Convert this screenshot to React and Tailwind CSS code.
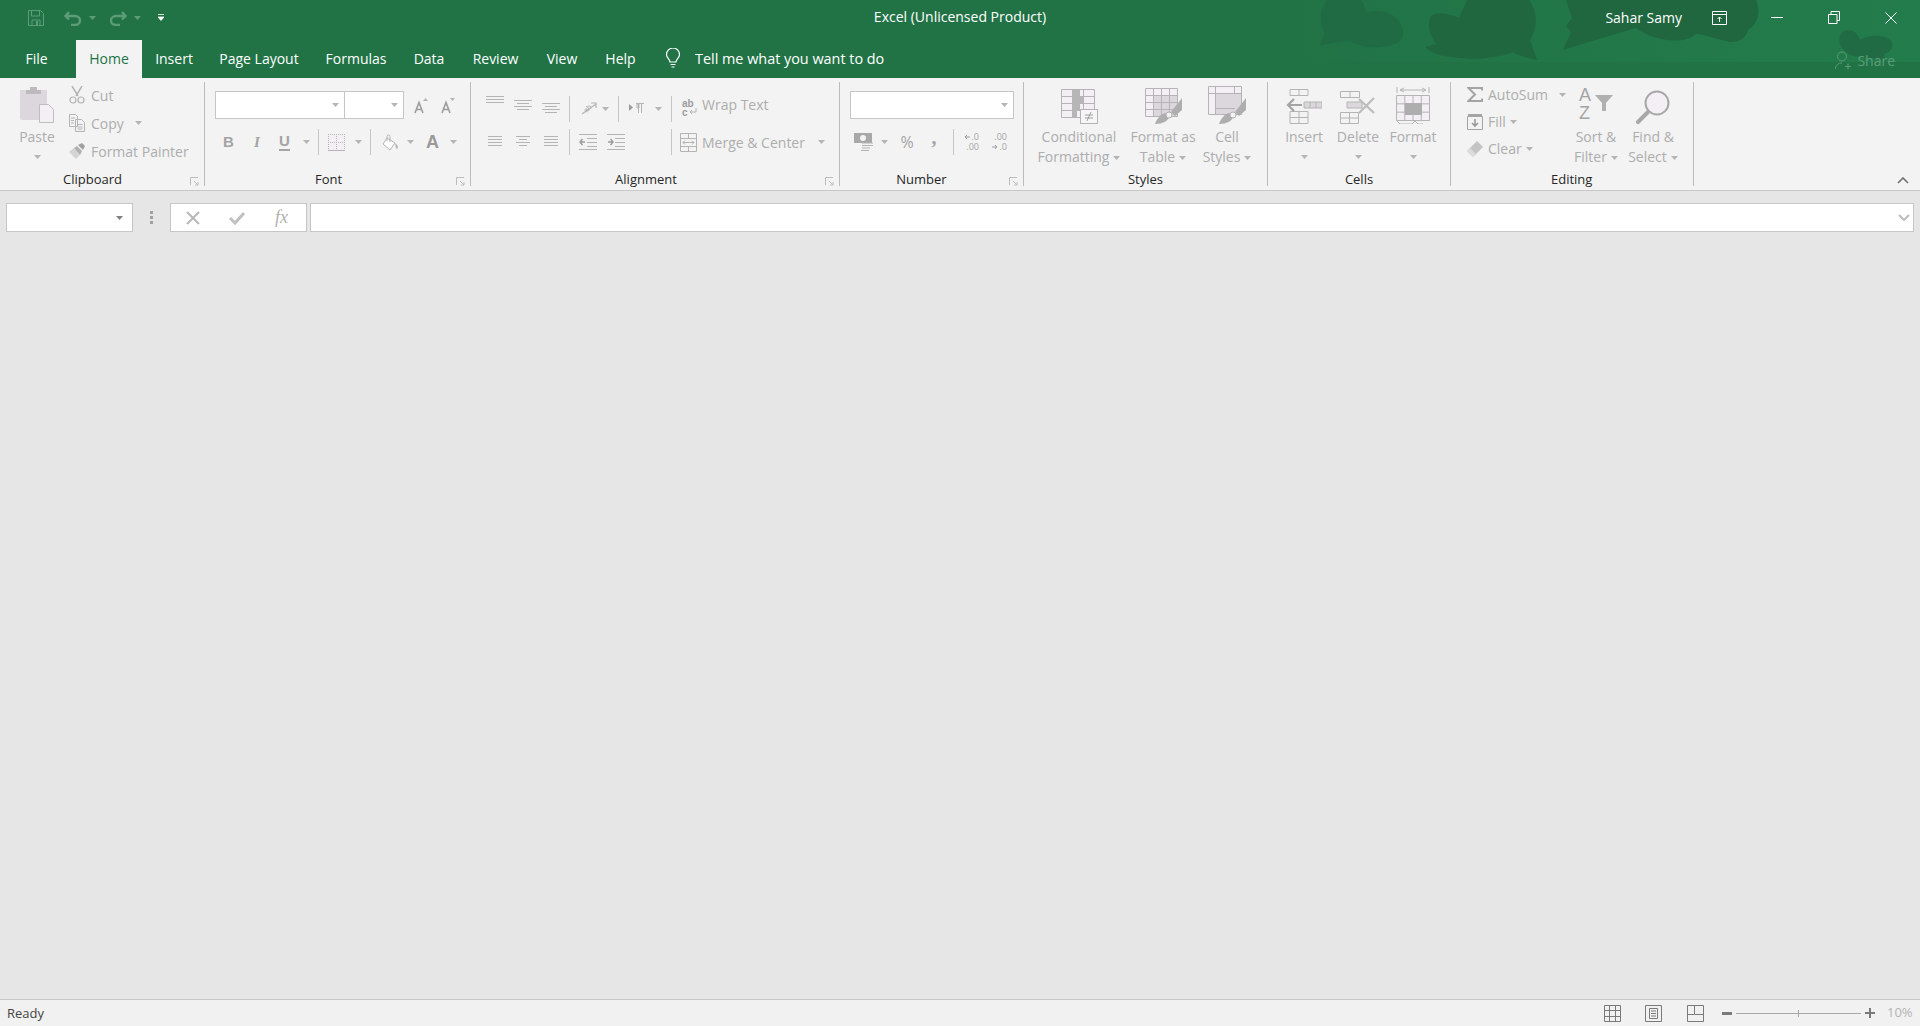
import React from "react";

const G = "#b4b4b4";
const D = "#9c9c9c";
const L = "#dcd7dc";
const P = "#f3eff5";

function Ico({ w, h, className = "", children }) {
  return (
    <svg width={w} height={h} viewBox={`0 0 ${w} ${h}`} fill="none" className={`shrink-0 ${className}`}>
      {children}
    </svg>
  );
}

function Caret({ className = "", color = G }) {
  return (
    <Ico w={7} h={4} className={className}>
      <path d="M0 0h7L3.5 4z" fill={color} />
    </Ico>
  );
}

function Div({ className = "" }) {
  return <div className={`w-px h-[26px] bg-[#c6c6c6] shrink-0 ${className}`}></div>;
}

function Launcher() {
  return (
    <Ico w={9} h={9} className="absolute right-[5px] top-[3px]">
      <path d="M.5 8V.5H8M4 4l4 4M8 5v3H5" stroke="#bdbdbd" />
    </Ico>
  );
}

function Group({ label, width, launcher, labelClass = "justify-center", children }) {
  return (
    <div className={`${width} h-full flex flex-col border-r border-[#bcbcbc] shrink-0`}>
      <div className="h-[92px]">{children}</div>
      <div className={`relative h-[12px] flex items-center text-[#262626] text-[13px] ${labelClass}`}>
        {label}
        {launcher && <Launcher />}
      </div>
    </div>
  );
}

function Big({ lines, width, caretLine, className = "", children }) {
  return (
    <div className={`${width} flex flex-col items-center text-[14px] leading-[20px] text-[#adadad] shrink-0 ${className}`}>
      <div className="h-[45px] flex items-end pb-[3px]">{children}</div>
      {lines.map((t, i) => (
        <div key={t} className="flex items-center whitespace-nowrap">
          {t}
          {caretLine && i === lines.length - 1 && <Caret className="ml-[4px] mt-[2px]" />}
        </div>
      ))}
      {!caretLine && (
        <div className="h-[20px] flex items-center">
          <Caret />
        </div>
      )}
    </div>
  );
}

function Lines({ w = 18, h = 20, ys, short }) {
  return (
    <Ico w={w} h={h}>
      {ys.map((y, i) => (
        <path key={y} d={`M${short && i % 2 ? 3 : 0} ${y}.5H${short && i % 2 ? w - 3 : w}`} stroke={G} />
      ))}
    </Ico>
  );
}

function Grid3({ x, y, w, h, cols, rows }) {
  const out = [];
  for (let i = 0; i <= cols; i++) out.push(<path key={"c" + i} d={`M${x + (i * w) / cols} ${y}v${h}`} stroke={G} />);
  for (let i = 0; i <= rows; i++) out.push(<path key={"r" + i} d={`M${x} ${y + (i * h) / rows}h${w}`} stroke={G} />);
  return out;
}

function Brush({ x, y }) {
  return (
    <g transform={`translate(${x} ${y})`}>
      <path d="M0 18C2 12 6 8 10 7l4 4c-1 4-6 7-14 7z" fill="#aeaeae" />
      <circle cx="14" cy="9" r="3" fill="#f3f3f3" stroke="#aeaeae" />
      <path d="M16 6L27-8V4L20 10z" fill="#aeaeae" />
    </g>
  );
}

function Tab({ width, children }) {
  return <div className={`${width} text-center mb-[2px]`}>{children}</div>;
}

export default function App() {
  return (
    <div className="h-screen flex flex-col bg-[#e6e6e6] overflow-hidden font-['Open_Sans',sans-serif]">
      {/* title + tabs */}
      <div className="relative bg-[#217346] text-white shrink-0">
        <svg className="absolute left-0 top-0" width="1920" height="62" viewBox="0 0 1920 62">
          <defs>
            <linearGradient id="fade" x1="0" x2="1" y1="0" y2="0">
              <stop offset="0" stopColor="#237c4c" stopOpacity="0" />
              <stop offset="1" stopColor="#237c4c" />
            </linearGradient>
          </defs>
          <rect x="1290" width="630" height="62" fill="url(#fade)" />
          <g>
            <path fill="#206b43" d="M1319 46l6-12c-6-10-6-24 2-34h34c3 4 5 8 5 13 6-3 14-3 22 0 10 4 16 12 15 22-1 7-8 11-22 12-16 2-28-4-32-6-10 1-20 2-30 5z" />
            <path fill="#20663f" d="M1425 47l12-3c-8-8-10-20-6-28 5-4 18-3 28 2l8-18h62c9 12 9 28 1 40l7 20c-10-2-18-4-24-8-14 6-38 8-52 6-14-1-28-3-36-11z" />
            <path fill="#20663f" d="M1563 50l8-18-5-6 6-8-6-18h190c5 12 2 24-8 30-2 8-8 12-18 12-18-4-26-8-34-8-14 12-44 6-60-6-20 6-48 14-73 22z" />
            <path fill="#206b43" d="M1840 44c-2-8 2-14 8-14 6 0 10 4 12 10 8-6 26-6 32 2 2 6-2 10-8 12l2 6-14-2c-12 0-28-2-32-14z" />
          </g>
        </svg>

        <div className="relative h-[40px] pb-[5px] grid grid-cols-[1fr_auto_1fr] items-center">
          <div className="flex items-center pl-[28px]">
            <Ico w={16} h={16}>
              <path d="M.5.5h12l3 3v12H.5z" stroke="#5c9c79" />
              <path d="M3.5 1v5h8V1M4 15v-5h8v5" stroke="#5c9c79" />
              <path d="M8 11h2v4H8z" fill="#5c9c79" />
            </Ico>
            <Ico w={18} h={16} className="ml-[20px]">
              <path d="M5 2L1.5 6 5 9.5M2 6h9c3 0 5 2 5 4.5S14 15 11 15H7" stroke="#5c9c79" strokeWidth="2.4" />
            </Ico>
            <Caret className="ml-[7px]" color="#5c9c79" />
            <Ico w={18} h={16} className="ml-[13px]">
              <path d="M13 2l3.5 4L13 9.5M16 6H7c-3 0-5 2-5 4.5S4 15 7 15h4" stroke="#5c9c79" strokeWidth="2.4" />
            </Ico>
            <Caret className="ml-[7px]" color="#5c9c79" />
            <Ico w={6} h={8} className="ml-[17px]">
              <path d="M0 .5h6M0 3h6L3 6.5z" stroke="#fff" fill="#fff" strokeWidth=".8" />
            </Ico>
          </div>
          <div className="text-[14px] whitespace-nowrap -mt-[2px]">Excel (Unlicensed Product)</div>
          <div className="flex items-center justify-end pr-[23px]">
            <span className="text-[14px] whitespace-nowrap mr-[30px]">Sahar Samy</span>
            <Ico w={15} h={14}>
              <path d="M.5.5h14v13H.5zM1 3.5h13M7.5 11V6M5.5 8l2-2 2 2" stroke="#fff" />
            </Ico>
            <Ico w={12} h={1} className="ml-[44px]">
              <path d="M0 .5h12" stroke="#fff" />
            </Ico>
            <Ico w={12} h={13} className="ml-[45px]">
              <path d="M.5 3.5h8.500v9H.5zM3 3V.5h8.500v9H9" stroke="#fff" />
            </Ico>
            <Ico w={12} h={12} className="ml-[45px]">
              <path d="M.5.5l11 11M11.500.5l-11 11" stroke="#fff" />
            </Ico>
          </div>
        </div>

        <div className="relative h-[38px] flex items-center text-[14px]">
          <div className="w-[76px] h-full flex items-center justify-center pr-[3px] pb-[2px]">File</div>
          <div className="w-[66px] h-full flex items-center justify-center pb-[2px] bg-[#f3f3f3] text-[#217346]">Home</div>
          <Tab width="w-[64px]">Insert</Tab>
          <Tab width="w-[106px]">Page Layout</Tab>
          <Tab width="w-[88px]">Formulas</Tab>
          <Tab width="w-[58px]">Data</Tab>
          <Tab width="w-[75px]">Review</Tab>
          <Tab width="w-[58px]">View</Tab>
          <Tab width="w-[59px]">Help</Tab>
          <Ico w={16} h={20} className="ml-[15px] mb-[2px]">
            <path d="M5 14c0-3-3.500-4-3.500-7.500a6.500 6.500 0 0 1 13 0C14.500 10 11 11 11 14zM5.500 16.500h5M6.500 19h3" stroke="#fff" strokeWidth="1.2" />
          </Ico>
          <div className="ml-[14px] mb-[1px] text-[14.400px] whitespace-nowrap">Tell me what you want to do</div>
          <div className="ml-auto mr-[25px] flex items-center text-[#5c9c79]">
            <Ico w={16} h={19} className="mt-[3px]">
              <circle cx="7" cy="5.500" r="4.500" stroke="#5c9c79" />
              <path d="M.5 18c0-4 3-6 6.500-6M10 15.500h6M13 12.500v6" stroke="#5c9c79" />
            </Ico>
            <span className="ml-[6px] mt-[3px]">Share</span>
          </div>
        </div>
      </div>

      {/* ribbon */}
      <div className="relative h-[113px] pt-[4px] pb-[4px] bg-[#f3f3f3] border-b border-[#c8c8c8] flex shrink-0">
        <Group label="Clipboard" width="w-[205px]" launcher labelClass="justify-start pl-[63px]">
          <div className="flex">
            <div className="ml-[12px] w-[50px] flex flex-col items-center text-[14px] leading-[20px] text-[#adadad]">
              <div className="h-[45px] pt-[4px]">
                <Ico w={34} h={37}>
                  <path d="M0 4h27v30H2a2 2 0 0 1-2-2z" fill={L} />
                  <path d="M6 4h15v4H6zM10 1h7v4h-7z" fill="#bdb9bd" />
                  <path d="M19.500 18.500h9l5 5v13h-14z" fill={P} stroke="#bdbdbd" />
                </Ico>
              </div>
              <div>Paste</div>
              <div className="h-[20px] flex items-center">
                <Caret />
              </div>
            </div>
            <div className="ml-[7px] -mt-[1px] text-[14px] text-[#adadad]">
              <div className="h-[28px] flex items-center">
                <Ico w={16} h={18}>
                  <path d="M3 0l6 10M13 0L7 10" stroke={G} strokeWidth="1.5" />
                  <circle cx="4" cy="14" r="3" stroke={G} strokeWidth="1.2" />
                  <circle cx="12" cy="14" r="3" stroke={G} strokeWidth="1.2" />
                </Ico>
                <span className="ml-[6px]">Cut</span>
              </div>
              <div className="h-[28px] flex items-center">
                <Ico w={16} h={18}>
                  <path d="M.5.5h6l2 2v10H.5zM6.500 5.500h6l3 3v9h-9zM2 4h4M2 6.500h3M2 9h3M8.500 10.500h5M8.500 13h5M8.500 15h5" stroke={G} />
                </Ico>
                <span className="ml-[6px]">Copy</span>
                <Caret className="ml-[11px]" />
              </div>
              <div className="h-[28px] flex items-center">
                <Ico w={17} h={16}>
                  <path d="M0 9l5-4 6 7-4 4z" fill="#d6d3d6" />
                  <path d="M5 5l3-2 5 5-2 4z" fill="#b0b0b0" />
                  <path d="M9 2l4-2 3 3-2 4z" fill="#a0a0a0" />
                </Ico>
                <span className="ml-[5px] whitespace-nowrap">Format Painter</span>
              </div>
            </div>
          </div>
        </Group>

        <Group label="Font" width="w-[266px]" launcher labelClass="justify-start pl-[110px]">
          <div className="h-[37px] flex items-end">
            <div className="ml-[10px] w-[130px] h-[28px] bg-white border border-[#c6c6c6] flex items-center justify-end pr-[5px]">
              <Caret />
            </div>
            <div className="-ml-px w-[60px] h-[28px] bg-white border border-[#c6c6c6] flex items-center justify-end pr-[5px]">
              <Caret />
            </div>
            <Ico w={14} h={16} className="ml-[10px] mb-[5px]">
              <path d="M1 15L5 4.500 9 15M2.500 11.500h5" stroke={D} strokeWidth="1.6" />
              <path d="M9 3l2.500-3L14 3z" fill={G} />
            </Ico>
            <Ico w={14} h={16} className="ml-[13px] mb-[5px]">
              <path d="M1 15L5 4.500 9 15M2.500 11.500h5" stroke={D} strokeWidth="1.6" />
              <path d="M9 0l2.500 3L14 0z" fill={G} />
            </Ico>
          </div>
          <div className="mt-[10px] h-[26px] flex items-center text-[#a4a4a4]">
            <span className="ml-[18px] w-[10px] text-center text-[15px] font-bold font-['Liberation_Sans',sans-serif]">B</span>
            <span className="ml-[20px] w-[8px] text-center text-[15px] font-bold italic font-['Liberation_Serif',serif]">I</span>
            <div className="ml-[18px] w-[11px] text-center text-[15px] font-bold font-['Liberation_Sans',sans-serif] leading-[16px] border-b-2 border-[#a4a4a4]">U</div>
            <Caret className="ml-[13px]" />
            <Div className="ml-[8px]" />
            <Ico w={17} h={17} className="ml-[9px]">
              <path d="M1 1h15v15H1z" fill={P} />
              <path d="M.5 0v16M8.500 0v16M16.500 0v16M0 .5h17M0 8.500h17" stroke={G} strokeDasharray="1 1" />
              <path d="M0 16.500h17" stroke={G} />
            </Ico>
            <Caret className="ml-[10px]" />
            <Div className="ml-[8px]" />
            <Ico w={16} h={17} className="ml-[11px]">
              <path d="M5 4l8 5-5 7-7-6z" stroke={G} fill="#fff" />
              <path d="M5 7V2.500a1.500 1.500 0 0 1 3 0V8" stroke={G} />
              <path d="M13 9c2 1 3 3 3 5.500h-2z" fill={G} />
            </Ico>
            <Caret className="ml-[9px]" />
            <span className="ml-[12px] w-[12px] text-center text-[18px] font-bold text-[#9a9a9a] font-['Liberation_Sans',sans-serif]">A</span>
            <Caret className="ml-[12px]" />
          </div>
        </Group>

        <Group label="Alignment" width="w-[369px]" launcher labelClass="justify-center pr-[18px]">
          <div className="h-[37px] pt-[14px] flex items-start">
            <div className="ml-[15px]">
              <Lines ys={[0, 3, 6]} />
            </div>
            <div className="ml-[10px]">
              <Lines ys={[4, 7, 10, 13]} short />
            </div>
            <div className="ml-[10px]">
              <Lines ys={[7, 10, 13, 16]} short />
            </div>
            <Div className="ml-[9px]" />
            <Ico w={19} h={18} className="ml-[9px] mt-[2px]">
              <text x="4" y="13" fontSize="7" fontWeight="700" fill={G} fontFamily="Liberation Sans" transform="rotate(-45 8 10)">ab</text>
              <path d="M3 16L17 6M12 5h5v5" stroke={G} strokeWidth="1.200" />
            </Ico>
            <Caret className="ml-[4px] mt-[11px]" />
            <Div className="ml-[9px]" />
            <Ico w={15} h={10} className="ml-[10px] mt-[7px]">
              <path d="M0 1l4 3.500L0 8z" fill={D} />
              <path d="M7 .5h8M9.500 1v9M12.500 1v9M8 1h2v4H8z" stroke={G} />
            </Ico>
            <Caret className="ml-[11px] mt-[11px]" />
            <Div className="ml-[9px]" />
            <Ico w={15} h={18} className="ml-[10px] mt-[3px]">
              <text x="0" y="8" fontSize="10" fontWeight="700" fill={D} fontFamily="Liberation Sans">ab</text>
              <text x="0" y="17" fontSize="10" fontWeight="700" fill={D} fontFamily="Liberation Sans">c</text>
              <path d="M14 9v4H8M10 11l-2 2 2 2" stroke={G} />
            </Ico>
            <span className="ml-[5px] -mt-[2px] text-[14px] text-[#adadad] whitespace-nowrap">Wrap Text</span>
          </div>
          <div className="mt-[10px] h-[26px] flex items-center">
            <div className="ml-[17px]">
              <Lines w={14} h={14} ys={[1, 4, 7, 10]} />
            </div>
            <div className="ml-[14px]">
              <Lines w={14} h={14} ys={[1, 4, 7, 10]} short />
            </div>
            <div className="ml-[14px]">
              <Lines w={14} h={14} ys={[1, 4, 7, 10]} />
            </div>
            <Div className="ml-[11px]" />
            <Ico w={18} h={16} className="ml-[9px]">
              <path d="M0 .5h18M8 4.500h10M8 8.500h10M8 12.500h10M0 15.500h18" stroke={G} />
              <path d="M6 8H1M3.500 5L1 8l2.500 3" stroke={D} strokeWidth="1.500" />
            </Ico>
            <Ico w={18} h={16} className="ml-[10px]">
              <path d="M0 .5h18M8 4.500h10M8 8.500h10M8 12.500h10M0 15.500h18" stroke={G} />
              <path d="M1 8h5M3.500 5L6 8l-2.500 3" stroke={D} strokeWidth="1.500" />
            </Ico>
            <Div className="ml-[46px]" />
            <Ico w={17} h={19} className="ml-[8px]">
              <path d="M.5.500h16v18H.5zM1 5.500h15M1 13.500h15M8.500 1v4M8.500 14v4M3 9.500h11M5 7.500l-2 2 2 2M12 7.500l2 2-2 2" stroke={G} />
            </Ico>
            <span className="ml-[5px] w-[106px] text-[14px] text-[#adadad] whitespace-nowrap">Merge &amp; Center</span>
            <Caret className="ml-[10px]" />
          </div>
        </Group>

        <Group label="Number" width="w-[184px]" launcher labelClass="justify-center pr-[20px]">
          <div className="h-[37px] flex items-end">
            <div className="ml-[10px] w-[164px] h-[28px] bg-white border border-[#c6c6c6] flex items-center justify-end pr-[5px]">
              <Caret />
            </div>
          </div>
          <div className="mt-[10px] h-[26px] flex items-center">
            <Ico w={19} h={20} className="ml-[14px]">
              <path d="M0 1h18v10H0z" fill="#a8a8a8" />
              <circle cx="9" cy="6" r="3" fill="#f3f3f3" />
              <path d="M8 11h11M8 13.500h11M8 16h8M7 18.500h8" stroke={G} strokeWidth="1.200" />
            </Ico>
            <Caret className="ml-[8px]" />
            <span className="ml-[11px] w-[16px] text-center text-[16px] text-[#a4a4a4]">%</span>
            <span className="ml-[15px] w-[8px] text-center text-[20px] leading-[20px] font-bold text-[#a4a4a4] font-['Liberation_Serif',serif] -mt-[10px]">,</span>
            <Div className="ml-[15px]" />
            <div className="ml-[11px] w-[14px] text-[9px] leading-[10px] text-[#a4a4a4] text-right">
              <div className="flex items-center justify-end">
                <Ico w={6} h={6} className="mr-px">
                  <path d="M6 3H1M3 1L1 3l2 2" stroke={D} />
                </Ico>
                .0
              </div>
              <div>.00</div>
            </div>
            <div className="ml-[13px] w-[15px] text-[9px] leading-[10px] text-[#a4a4a4] text-right">
              <div>.00</div>
              <div className="flex items-center justify-end">
                <Ico w={6} h={6} className="mr-px">
                  <path d="M0 3h5M3 1l2 2-2 2" stroke={D} />
                </Ico>
                .0
              </div>
            </div>
          </div>
        </Group>

        <Group label="Styles" width="w-[244px]" labelClass="justify-center">
          <div className="flex">
            <Big lines={["Conditional", "Formatting"]} width="w-[80px]" caretLine className="ml-[15px]">
              <Ico w={37} h={35}>
                <rect x="1" y="0" width="33" height="27" fill={P} />
                {Grid3({ x: 0.5, y: 0.5, w: 33, h: 28, cols: 3, rows: 4 })}
                <path d="M11 1h8v7h-8zM11 8h11v7H11zM11 15h8v7h-8zM11 22h5v6h-5z" fill="#b6b6b6" />
                <rect x="19.500" y="20.500" width="17" height="14" fill="#f7f5f7" stroke={G} />
                <path d="M24 26h8M24 29h8M30 23l-4 9" stroke="#a0a0a0" />
              </Ico>
            </Big>
            <Big lines={["Format as", "Table"]} width="w-[76px]" caretLine className="ml-[6px]">
              <Ico w={37} h={36}>
                <rect x="1" y="0" width="32" height="28" fill={P} />
                <rect x="8" y="7" width="25" height="21" fill={L} />
                {Grid3({ x: 0.5, y: 0.5, w: 32, h: 28, cols: 4, rows: 4 })}
                <Brush x={10} y={18} />
              </Ico>
            </Big>
            <Big lines={["Cell", "Styles"]} width="w-[52px]" caretLine>
              <Ico w={38} h={38}>
                <rect x="1" y="0" width="33" height="28" fill={P} />
                <rect x="8" y="7" width="26" height="21" fill={L} />
                <path d="M.5.500h33v28H.5zM7.500 1v28M1 7.500h32M26.500 1v6M7 22.500h20" stroke={G} />
                <Brush x={11} y={20} />
              </Ico>
            </Big>
          </div>
        </Group>

        <Group label="Cells" width="w-[183px]" labelClass="justify-center">
          <div className="flex">
            <Big lines={["Insert"]} width="w-[44px]" className="ml-[14px]">
              <Ico w={36} h={35}>
                <path d="M4 .5h18v6H4zM13 1v6M4 22.500h18v12H4zM4 28.500h18M13 23v11" stroke={G} />
                <path d="M18 13h18v6H18zM24 13v6M30 13v6" fill={L} stroke={G} />
                <path d="M16 16H2M8 10l-6 6 6 6" stroke="#a4a4a4" strokeWidth="2.200" />
              </Ico>
            </Big>
            <Big lines={["Delete"]} width="w-[44px]" className="ml-[10px]">
              <Ico w={36} h={33}>
                <path d="M.5.500h19v6H.5zM10 1v6M.5 21.500h18v11H.5zM.5 27h18M9.500 22v10" stroke={G} />
                <path d="M7 11h15v6H7z" fill={L} stroke={G} />
                <path d="M19 8l15 14M34 7L19 22" stroke="#bcbcbc" strokeWidth="2.200" />
              </Ico>
            </Big>
            <Big lines={["Format"]} width="w-[44px]" className="ml-[11px]">
              <Ico w={35} h={37}>
                <path d="M1 0v6M33 0v6M4 3h26M8 1L4 3l4 2M26 1l4 2-4 2" stroke={G} />
                <rect x="1" y="8" width="33" height="26" fill={P} />
                {Grid3({ x: 0.5, y: 8.5, w: 33, h: 25, cols: 4, rows: 3 })}
                <rect x="9" y="16" width="17" height="12" fill="#aeaeae" />
                <path d="M1 34l3 3h12l3-3 3 3h5" stroke={G} />
              </Ico>
            </Big>
          </div>
        </Group>

        <Group label="Editing" width="w-[243px]" labelClass="justify-start pl-[100px]">
          <div className="flex">
            <div className="ml-[16px] -mt-[1px] w-[106px] text-[14px] text-[#adadad]">
              <div className="h-[27px] flex items-center">
                <Ico w={16} h={15}>
                  <path d="M15 3.500V1H1.500L8 7.500 1.500 14H15v-2.500" stroke="#a4a4a4" strokeWidth="2" />
                </Ico>
                <span className="ml-[5px]">AutoSum</span>
                <Caret className="ml-[11px]" />
              </div>
              <div className="h-[27px] flex items-center">
                <Ico w={16} h={16}>
                  <path d="M.5 2.500h15v13H.5z" stroke="#a4a4a4" />
                  <path d="M1 1h14" stroke="#a4a4a4" strokeWidth="2" />
                  <path d="M8 5v7M5 9l3 3 3-3" stroke="#9a9a9a" strokeWidth="1.600" />
                </Ico>
                <span className="ml-[5px]">Fill</span>
                <Caret className="ml-[4px]" />
              </div>
              <div className="h-[27px] flex items-center">
                <Ico w={16} h={16}>
                  <path d="M0 10l10-10 6 6-10 10z" fill="#c4c4c4" />
                  <path d="M0 10l3-3 6 6-3 3z" fill="#dcdcdc" />
                </Ico>
                <span className="ml-[5px]">Clear</span>
                <Caret className="ml-[4px]" />
              </div>
            </div>
            <Big lines={["Sort &", "Filter"]} width="w-[48px]" caretLine className="-ml-[1px]">
              <Ico w={34} h={42}>
                <text x="0" y="19" fontSize="18" fill="#a4a4a4" fontFamily="Liberation Sans">A</text>
                <text x="0" y="37" fontSize="18" fill="#a4a4a4" fontFamily="Liberation Sans">Z</text>
                <path d="M16 13h18l-7 8v8h-4v-8z" fill="#b0b0b0" />
              </Ico>
            </Big>
            <Big lines={["Find &", "Select"]} width="w-[54px]" caretLine className="ml-[6px]">
              <Ico w={34} h={34}>
                <circle cx="21" cy="13" r="11.500" fill={P} stroke="#a8a8a8" strokeWidth="2" />
                <path d="M12 22L2 32" stroke="#a8a8a8" strokeWidth="4" strokeLinecap="round" />
              </Ico>
            </Big>
          </div>
        </Group>

        <Ico w={12} h={7} className="absolute right-[11px] top-[99px]">
          <path d="M1 6l5-5 5 5" stroke="#6f6f6f" strokeWidth="1.600" />
        </Ico>
      </div>

      {/* formula bar */}
      <div className="h-[42px] pt-[12px] flex items-start shrink-0">
        <div className="ml-[6px] w-[127px] h-[29px] bg-white border border-[#c6c6c6] flex items-center justify-end pr-[9px]">
          <Caret color="#808080" />
        </div>
        <Ico w={3} h={13} className="ml-[17px] mt-[8px]">
          <path d="M0 0h3v3H0zM0 5h3v3H0zM0 10h3v3H0z" fill="#a0a0a0" />
        </Ico>
        <div className="ml-[17px] w-[137px] h-[29px] bg-white border border-[#c6c6c6] flex items-center">
          <Ico w={14} h={14} className="ml-[15px]">
            <path d="M1 1l12 12M13 1L1 13" stroke="#b8b8b8" strokeWidth="2" />
          </Ico>
          <Ico w={16} h={14} className="ml-[29px]">
            <path d="M1 7l5 5L15 2" stroke="#c0c0c0" strokeWidth="3" />
          </Ico>
          <span className="ml-[30px] text-[18px] text-[#b0b0b0] italic font-['Liberation_Serif',serif]">fx</span>
        </div>
        <div className="ml-[3px] w-[1604px] h-[29px] bg-white border border-[#c6c6c6] flex items-center justify-end pr-[3px]">
          <Ico w={12} h={7}>
            <path d="M1 1l5 5 5-5" stroke="#bcbcbc" strokeWidth="2" />
          </Ico>
        </div>
      </div>

      <div className="flex-1"></div>

      {/* status bar */}
      <div className="h-[27px] bg-[#f1f1f1] border-t border-[#c8c8c8] flex items-center shrink-0">
        <span className="ml-[7px] pt-[2px] text-[13px] text-[#444444]">Ready</span>
        <div className="ml-auto flex items-center pr-[10px]">
          <Ico w={17} h={17}>
            <path d="M.5.500h16v16H.5zM5.500 1v15M11.500 1v15M1 5.500h15M1 11.500h15" stroke="#7a7a7a" />
          </Ico>
          <Ico w={17} h={17} className="ml-[24px]">
            <path d="M.5.500h16v16H.5zM4.500 3.500h8v10h-8zM6 6h5M6 8.500h5M6 11h5" stroke="#7a7a7a" />
          </Ico>
          <Ico w={17} h={17} className="ml-[25px]">
            <path d="M.5.500h16v16H.5zM.5 9.500h7V1M8 9.500h8" stroke="#7a7a7a" />
          </Ico>
          <Ico w={10} h={3} className="ml-[18px]">
            <path d="M0 0h10v3H0z" fill="#7a7a7a" />
          </Ico>
          <div className="relative ml-[4px] w-[125px] h-px bg-[#a8a8a8]">
            <div className="absolute left-[62px] -top-[3px] w-px h-[7px] bg-[#a8a8a8]"></div>
          </div>
          <Ico w={10} h={10} className="ml-[4px]">
            <path d="M0 4h10v2H0zM4 0h2v10H4z" fill="#7a7a7a" />
          </Ico>
          <span className="ml-[12px] w-[23px] text-[13px] text-[#b4b4b4]">10%</span>
        </div>
      </div>
    </div>
  );
}
